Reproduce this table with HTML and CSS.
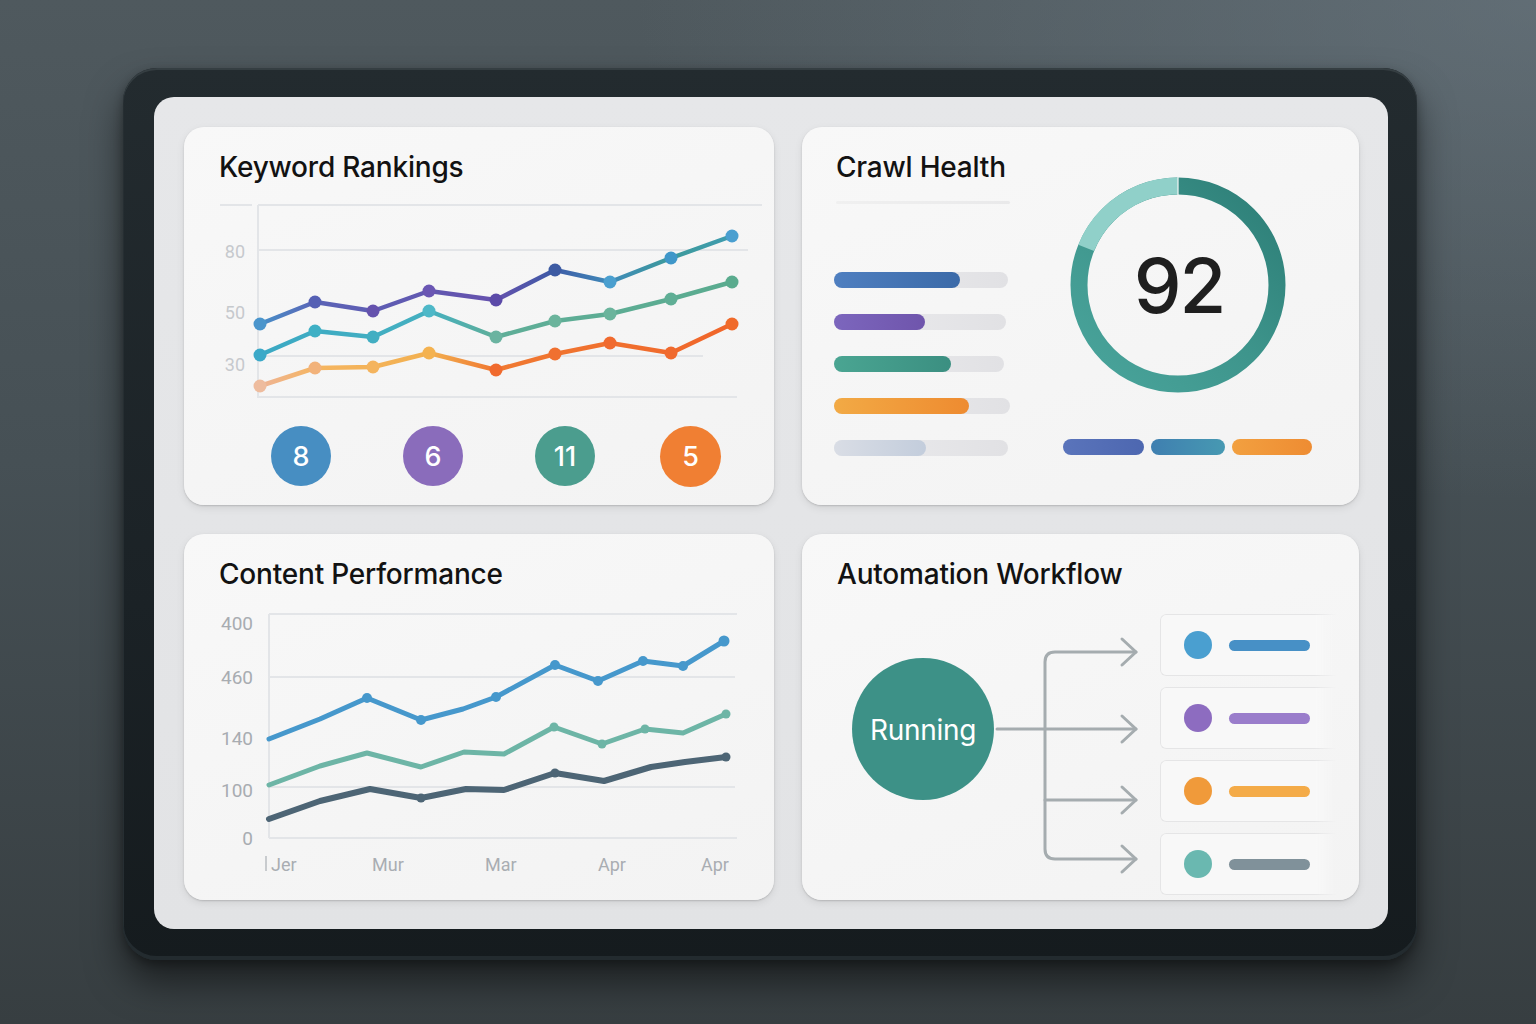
FILE: index.html
```
<!DOCTYPE html>
<html lang="en">
<head>
<meta charset="utf-8">
<title>SEO Dashboard</title>
<link rel="stylesheet" href="styles.css">
</head>
<body>
<div class="tablet">
  <main class="screen">

    <section class="card">
      <h2 class="card-title">Keyword Rankings</h2>
      <svg class="chart" width="590" height="236" viewBox="184 184 590 236">
        <defs>
          <linearGradient id="kl1" gradientUnits="userSpaceOnUse" x1="260" y1="0" x2="732" y2="0">
            <stop offset="0" stop-color="#4790c8"/>
            <stop offset="0.12" stop-color="#5b63b6"/>
            <stop offset="0.5" stop-color="#6551ad"/>
            <stop offset="0.62" stop-color="#3e5aa6"/>
            <stop offset="0.74" stop-color="#3f8ab9"/>
            <stop offset="0.87" stop-color="#3d9a9b"/>
            <stop offset="1" stop-color="#3f9cb0"/>
          </linearGradient>
          <linearGradient id="kl2" gradientUnits="userSpaceOnUse" x1="260" y1="0" x2="732" y2="0">
            <stop offset="0" stop-color="#3ba9c4"/>
            <stop offset="0.36" stop-color="#45b0c0"/>
            <stop offset="0.5" stop-color="#5fae98"/>
            <stop offset="1" stop-color="#5aab8f"/>
          </linearGradient>
          <linearGradient id="kl3" gradientUnits="userSpaceOnUse" x1="260" y1="0" x2="732" y2="0">
            <stop offset="0" stop-color="#eeb496"/>
            <stop offset="0.12" stop-color="#f5b560"/>
            <stop offset="0.36" stop-color="#f2b050"/>
            <stop offset="0.49" stop-color="#f07a32"/>
            <stop offset="1" stop-color="#f0652a"/>
          </linearGradient>
        </defs>
        <g class="grid">
          <line x1="220" y1="205" x2="252" y2="205"/>
          <line x1="258" y1="205" x2="762" y2="205"/>
          <line x1="258" y1="250" x2="748" y2="250"/>
          <line x1="258" y1="356" x2="703" y2="356"/>
          <line x1="258" y1="397" x2="737" y2="397"/>
          <line x1="258" y1="205" x2="258" y2="398"/>
        </g>
        <g class="axis-label light">
          <text x="245" y="258">80</text>
          <text x="245" y="319">50</text>
          <text x="245" y="371">30</text>
        </g>
        <polyline class="kline" stroke="url(#kl1)" points="260,324 315,302 373,311 429,291 496,300 555,270 610,282 671,258 732,236"/>
        <polyline class="kline" stroke="url(#kl2)" points="260,355 315,331 373,337 429,311 496,337 555,321 610,314 671,299 732,282"/>
        <polyline class="kline" stroke="url(#kl3)" points="260,386 315,368 373,367 429,353 496,370 555,354 610,343 671,353 732,324"/>
        <g class="dots">
          <circle cx="260" cy="324" r="6.5" fill="#4a95cc"/>
          <circle cx="315" cy="302" r="6.5" fill="#5560b4"/>
          <circle cx="373" cy="311" r="6.5" fill="#6552ad"/>
          <circle cx="429" cy="291" r="6.5" fill="#6a56b3"/>
          <circle cx="496" cy="300" r="6.5" fill="#5b4aa8"/>
          <circle cx="555" cy="270" r="6.5" fill="#3d5ba3"/>
          <circle cx="610" cy="282" r="6.5" fill="#4a9fcf"/>
          <circle cx="671" cy="258" r="6.5" fill="#3f97c9"/>
          <circle cx="732" cy="236" r="6.5" fill="#4a9fd0"/>

          <circle cx="260" cy="355" r="6.5" fill="#3ba9c8"/>
          <circle cx="315" cy="331" r="6.5" fill="#3fb0c5"/>
          <circle cx="373" cy="337" r="6.5" fill="#42aec2"/>
          <circle cx="429" cy="311" r="6.5" fill="#4eb8c8"/>
          <circle cx="496" cy="337" r="6.5" fill="#6ab3a0"/>
          <circle cx="555" cy="321" r="6.5" fill="#6bb49c"/>
          <circle cx="610" cy="314" r="6.5" fill="#6ab49c"/>
          <circle cx="671" cy="299" r="6.5" fill="#5fae95"/>
          <circle cx="732" cy="282" r="6.5" fill="#5aab8e"/>

          <circle cx="260" cy="386" r="6.5" fill="#eebc9e"/>
          <circle cx="315" cy="368" r="6.5" fill="#f2b27a"/>
          <circle cx="373" cy="367" r="6.5" fill="#f4b45e"/>
          <circle cx="429" cy="353" r="6.5" fill="#f4b250"/>
          <circle cx="496" cy="370" r="6.5" fill="#f06a2e"/>
          <circle cx="555" cy="354" r="6.5" fill="#f07030"/>
          <circle cx="610" cy="343" r="6.5" fill="#f06a2e"/>
          <circle cx="671" cy="353" r="6.5" fill="#f06a2e"/>
          <circle cx="732" cy="324" r="6.5" fill="#f06a2a"/>
        </g>
      </svg>
      <div class="badges">
        <span class="badge b-blue">8</span>
        <span class="badge b-purple">6</span>
        <span class="badge b-teal">11</span>
        <span class="badge b-orange">5</span>
      </div>
    </section>

    <section class="card crawl">
      <div class="crawl-left">
        <h2 class="card-title">Crawl Health</h2>
        <div class="rule"></div>
        <div class="bars">
          <div class="track" style="width:174px"><div class="fill f-blue" style="width:126px"></div></div>
          <div class="track" style="width:172px"><div class="fill f-purple" style="width:91px"></div></div>
          <div class="track" style="width:170px"><div class="fill f-teal" style="width:117px"></div></div>
          <div class="track" style="width:176px"><div class="fill f-orange" style="width:135px"></div></div>
          <div class="track" style="width:174px"><div class="fill f-gray" style="width:92px"></div></div>
        </div>
      </div>
      <div class="crawl-right">
        <svg class="ring" width="230" height="230" viewBox="0 0 230 230">
          <defs>
            <linearGradient id="ringg" x1="1" y1="0" x2="0" y2="1">
              <stop offset="0" stop-color="#2c7d76"/>
              <stop offset="0.5" stop-color="#3e958c"/>
              <stop offset="1" stop-color="#4aa59c"/>
            </linearGradient>
          </defs>
          <circle cx="115" cy="115" r="99" fill="none" stroke="url(#ringg)" stroke-width="17"/>
          <path d="M 23.2 77.9 A 99 99 0 0 1 115 16" fill="none" stroke="#90d0c9" stroke-width="17"/>
          <line x1="115" y1="6" x2="115" y2="25" stroke="#f4f6f5" stroke-width="1.2"/>
          <text class="score" x="116" y="143">92</text>
        </svg>
        <div class="pills">
          <span class="pill p-blue" style="width:81px"></span>
          <span class="pill p-teal" style="width:74px"></span>
          <span class="pill p-orange" style="width:80px"></span>
        </div>
      </div>
    </section>

    <section class="card">
      <h2 class="card-title">Content Performance</h2>
      <svg class="chart" width="590" height="309" viewBox="184 591 590 309">
        <g class="grid">
          <line x1="269" y1="614" x2="737" y2="614"/>
          <line x1="269" y1="677" x2="735" y2="677"/>
          <line x1="269" y1="787" x2="735" y2="787"/>
          <line x1="269" y1="838" x2="737" y2="838"/>
          <line x1="269" y1="614" x2="269" y2="838"/>
        </g>
        <g class="axis-label">
          <text x="253" y="630">400</text>
          <text x="253" y="684">460</text>
          <text x="253" y="745">140</text>
          <text x="253" y="797">100</text>
          <text x="253" y="845">0</text>
        </g>
        <line x1="266" y1="856" x2="266" y2="871" class="tick"/>
        <g class="x-label">
          <text x="271" y="871">Jer</text>
          <text x="372" y="871">Mur</text>
          <text x="485" y="871">Mar</text>
          <text x="598" y="871">Apr</text>
          <text x="701" y="871">Apr</text>
        </g>
        <polyline class="cline c-dark" points="269,819 320,801 370,789 421,798 466,789 504,790 555,773 604,781 651,767 685,762 726,757"/>
        <polyline class="cline c-green" points="269,785 320,766 367,753 421,767 464,752 504,754 554,727 602,744 645,729 683,733 726,714"/>
        <polyline class="cline c-blue" points="269,739 320,719 367,698 421,720 463,709 496,697 555,665 598,681 643,661 683,666 724,641"/>
        <g fill="#4698cc">
          <circle cx="367" cy="698" r="5"/>
          <circle cx="421" cy="720" r="5"/>
          <circle cx="496" cy="697" r="5"/>
          <circle cx="555" cy="665" r="5"/>
          <circle cx="598" cy="681" r="5"/>
          <circle cx="643" cy="661" r="5"/>
          <circle cx="683" cy="666" r="5"/>
          <circle cx="724" cy="641" r="5.5"/>
        </g>
        <g fill="#6db5a6">
          <circle cx="554" cy="727" r="4.5"/>
          <circle cx="602" cy="744" r="4.5"/>
          <circle cx="645" cy="729" r="4.5"/>
          <circle cx="726" cy="714" r="4.5"/>
        </g>
        <g fill="#4d6575">
          <circle cx="421" cy="798" r="4.5"/>
          <circle cx="555" cy="773" r="4.5"/>
          <circle cx="726" cy="757" r="4.5"/>
        </g>
      </svg>
    </section>

    <section class="card">
      <h2 class="card-title">Automation Workflow</h2>
      <div class="flow">
        <svg class="flow-diagram" width="358" height="309" viewBox="802 591 358 309">
          <circle cx="923" cy="729" r="71" fill="#3d9187"/>
          <text class="running" x="923" y="740">Running</text>
          <g class="conn">
            <path d="M 997 729 H 1136"/>
            <path d="M 1136 652 H 1055 Q 1045 652 1045 662 V 849 Q 1045 859 1055 859 H 1136"/>
            <path d="M 1045 800 H 1136"/>
            <polyline points="1122,639 1136,652 1122,665"/>
            <polyline points="1122,716 1136,729 1122,742"/>
            <polyline points="1122,787 1136,800 1122,813"/>
            <polyline points="1122,846 1136,859 1122,872"/>
          </g>
        </svg>
        <div class="steps">
          <div class="step"><span class="dot d-blue"></span><span class="line l-blue"></span></div>
          <div class="step"><span class="dot d-purple"></span><span class="line l-purple"></span></div>
          <div class="step"><span class="dot d-orange"></span><span class="line l-orange"></span></div>
          <div class="step"><span class="dot d-teal"></span><span class="line l-gray"></span></div>
        </div>
      </div>
    </section>

  </main>
</div>
</body>
</html>
```
FILE: styles.css
```
html, body {
  margin: 0;
  padding: 0;
}

body {
  width: 1536px;
  height: 1024px;
  overflow: hidden;
  font-family: Inter, "Noto Sans", sans-serif;
  background:
    radial-gradient(ellipse 900px 500px at 100% 0%, rgba(112, 126, 136, 0.55), rgba(112, 126, 136, 0) 100%),
    linear-gradient(180deg, #4f595e 0%, #465055 45%, #373e41 100%);
}

.tablet {
  box-sizing: border-box;
  width: 1294px;
  height: 892px;
  margin: 68px 0 0 123px;
  padding: 29px 29px 31px 31px;
  border-radius: 34px;
  background: linear-gradient(180deg, #232b2f 0%, #1b2226 60%, #151b1e 100%);
  box-shadow:
    inset 0 2px 0 #353e42,
    inset 0 -4px 0 #232b2f,
    inset 0 0 0 1px #262e32,
    0 22px 36px rgba(0, 0, 0, 0.5),
    0 4px 10px rgba(0, 0, 0, 0.3);
}

.screen {
  box-sizing: border-box;
  width: 1234px;
  height: 832px;
  padding: 30px 29px 29px 30px;
  border-radius: 20px;
  background: linear-gradient(180deg, #e6e7e9 0%, #e2e3e5 100%);
  display: grid;
  grid-template-columns: 590px 557px;
  grid-template-rows: 378px 366px;
  column-gap: 28px;
  row-gap: 29px;
}

.card {
  background: linear-gradient(160deg, #f8f8f8 0%, #f3f3f3 100%);
  border-radius: 20px;
  box-shadow: 0 1px 2px rgba(0, 0, 0, 0.16), 0 3px 8px rgba(0, 0, 0, 0.08);
  overflow: hidden;
}

.card-title {
  margin: 0;
  padding: 23px 0 0 35px;
  font-family: Inter, "Noto Sans", sans-serif;
  font-weight: 500;
  font-size: 28px;
  line-height: 34px;
  letter-spacing: -0.2px;
  color: #121212;
}

.chart {
  display: block;
}

.grid line {
  stroke: #e3e5e8;
  stroke-width: 2;
}

.axis-label text {
  font-family: Roboto, "Liberation Sans", sans-serif;
  font-size: 19px;
  fill: #a8acb1;
  text-anchor: end;
}

.axis-label.light text {
  font-size: 18px;
  fill: #c6c9cd;
}

.x-label text {
  font-family: Roboto, "Liberation Sans", sans-serif;
  font-size: 18px;
  fill: #a9adb2;
}

.tick {
  stroke: #b8bcc0;
  stroke-width: 1.5;
}

.kline {
  fill: none;
  stroke-width: 4.5;
  stroke-linejoin: round;
  stroke-linecap: round;
}

.cline {
  fill: none;
  stroke-width: 5;
  stroke-linejoin: round;
  stroke-linecap: round;
}

.c-blue { stroke: #4698cc; }
.c-green { stroke: #6db5a6; }
.c-dark { stroke: #4d6575; stroke-width: 6; }

/* Keyword badges */
.badges {
  display: flex;
  gap: 72px;
  padding: 6px 0 0 87px;
}

.badge {
  width: 60px;
  height: 60px;
  border-radius: 50%;
  display: flex;
  align-items: center;
  justify-content: center;
  color: #fff;
  font-size: 27px;
  font-weight: 500;
  flex: none;
}

.badge:last-child {
  margin-left: -7px;
  width: 61px;
  height: 61px;
}

.b-blue { background: #478ec2; }
.b-purple { background: #8a6cbb; }
.b-teal { background: #4b9d8e; }
.b-orange { background: #f07f33; }

/* Crawl health */
.crawl {
  display: grid;
  grid-template-columns: 240px 1fr;
}

.crawl .card-title {
  padding-left: 34px;
}

.rule {
  margin: 17px 0 0 34px;
  width: 174px;
  height: 3px;
  border-radius: 2px;
  background: linear-gradient(90deg, #f0f0f0, #e9e9ea);
}

.bars {
  display: flex;
  flex-direction: column;
  gap: 26px;
  margin: 68px 0 0 32px;
}

.track {
  height: 16px;
  border-radius: 8px;
  background: linear-gradient(90deg, #ececee, #e1e1e4);
}

.fill {
  height: 100%;
  border-radius: 8px;
}

.f-blue { background: linear-gradient(90deg, #4f7fc0, #3b6aa8); }
.f-purple { background: linear-gradient(90deg, #7c66bd, #6f55ac); }
.f-teal { background: linear-gradient(90deg, #4aa592, #3b8f81); }
.f-orange { background: linear-gradient(90deg, #f2aa45, #ee8b30); }
.f-gray { background: linear-gradient(90deg, #d9dde5, #c3cddc); }

.crawl-right {
  display: flex;
  flex-direction: column;
  align-items: flex-start;
  padding: 43px 0 0 21px;
}

.ring {
  display: block;
}

.score {
  font-family: Inter, "Noto Sans", sans-serif;
  font-size: 76px;
  font-weight: 500;
  fill: #1f1f1f;
  text-anchor: middle;
  letter-spacing: -2px;
}

.pills {
  display: flex;
  gap: 7px;
  margin-top: 39px;
}

.pill {
  height: 16px;
  border-radius: 8px;
}

.p-blue { background: linear-gradient(90deg, #5a74bb, #4d67b0); }
.p-teal { background: linear-gradient(90deg, #3f7fb0, #4799b2); }
.p-orange { background: linear-gradient(90deg, #f2a040, #ee8c32); }

/* Automation workflow */
.flow {
  display: flex;
}

.flow-diagram {
  display: block;
  flex: none;
}

.running {
  font-family: Inter, "Noto Sans", sans-serif;
  font-size: 28px;
  fill: #ffffff;
  text-anchor: middle;
  letter-spacing: -0.3px;
}

.conn path,
.conn polyline {
  fill: none;
  stroke: #a5acaf;
  stroke-width: 3;
  stroke-linecap: round;
  stroke-linejoin: round;
}

.steps {
  display: flex;
  flex-direction: column;
  gap: 11px;
  padding-top: 23px;
  width: 176px;
}

.step {
  height: 62px;
  box-sizing: border-box;
  display: flex;
  align-items: center;
  padding-left: 23px;
  gap: 17px;
  background: #f8f8f8;
  border: 1px solid #e5e5e6;
  border-right: none;
  border-radius: 6px 0 0 6px;
  box-shadow: 0 1px 2px rgba(0, 0, 0, 0.05);
  -webkit-mask-image: linear-gradient(90deg, #000 88%, transparent 100%);
  mask-image: linear-gradient(90deg, #000 88%, transparent 100%);
}

.dot {
  width: 28px;
  height: 28px;
  border-radius: 50%;
  flex: none;
}

.line {
  width: 81px;
  height: 11px;
  border-radius: 6px;
  flex: none;
}

.d-blue { background: #4a9fd0; }
.d-purple { background: #8d6cc0; }
.d-orange { background: #f09a3a; }
.d-teal { background: #6ab8b0; }

.l-blue { background: #4790c6; }
.l-purple { background: #9a7dcb; }
.l-orange { background: #f4ab48; }
.l-gray { background: #80919a; }
```
